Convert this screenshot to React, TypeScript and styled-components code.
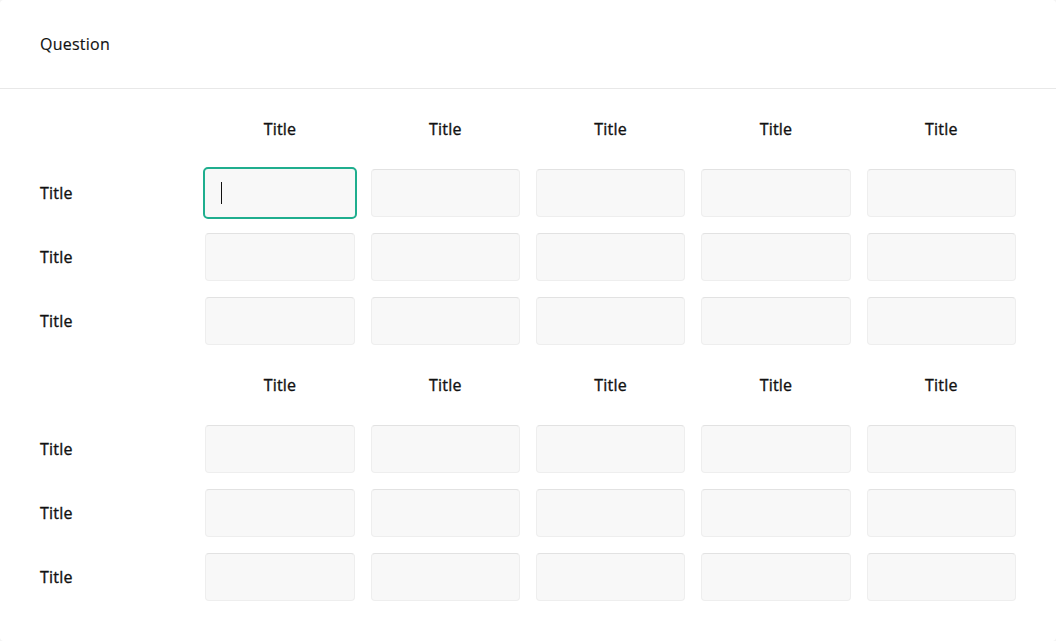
import React from "react";
import styled, { createGlobalStyle } from "styled-components";

const Global = createGlobalStyle`
  html, body { margin: 0; padding: 0; background: #f4f4f4; }
  body { font-family: "Open Sans", "Noto Sans", sans-serif; color: #1e1e1e; }
  * { box-sizing: border-box; }
`;

const Card = styled.div`
  width: 1056px;
  height: 641px;
  background: #fff;
  border-radius: 4px;
  overflow: hidden;
  display: flex;
  flex-direction: column;
`;

const Header = styled.div`
  height: 89px;
  padding: 0 40px;
  display: flex;
  align-items: center;
  border-bottom: 1px solid #e8e8e8;
  font-size: 16px;
  font-weight: 400;
  color: #111;
  letter-spacing: 0.25px;
  -webkit-text-stroke: 0.15px #111;
`;

const Grid = styled.div`
  padding: 16px 40px 40px;
  display: grid;
  grid-template-columns: repeat(6, 1fr);
  grid-auto-rows: 48px;
  gap: 16px;
`;

const ColHead = styled.div`
  display: flex;
  align-items: center;
  justify-content: center;
  font-size: 16px;
  color: #111;
  letter-spacing: 0.2px;
  -webkit-text-stroke: 0.35px #111;
`;

const RowLabel = styled.div`
  display: flex;
  align-items: center;
  font-size: 16px;
  color: #111;
  letter-spacing: 0.2px;
  -webkit-text-stroke: 0.35px #111;
`;

const Cell = styled.div<{ $focused?: boolean }>`
  position: relative;
  background: #f8f8f8;
  border-radius: 4px;
  border: 1px solid #eeeeee;
  border-top-color: #e2e2e2;
  ${(p) =>
    p.$focused
      ? `
    border: 2px solid #1fae8e;
    margin: -2px;
    border-radius: 5px;
  `
      : ""}
`;

const Caret = styled.span`
  position: absolute;
  left: 16px;
  top: 13px;
  width: 1px;
  height: 22px;
  background: #111;
`;

const cols = ["Title", "Title", "Title", "Title", "Title"];
const rows = ["Title", "Title", "Title"];

function Section({ focusFirst }: { focusFirst?: boolean }) {
  return (
    <>
      <div />
      {cols.map((c, i) => (
        <ColHead key={"h" + i}>{c}</ColHead>
      ))}
      {rows.map((r, ri) => (
        <React.Fragment key={"r" + ri}>
          <RowLabel>{r}</RowLabel>
          {cols.map((_, ci) => {
            const f = focusFirst && ri === 0 && ci === 0;
            return <Cell key={ci} $focused={f}>{f && <Caret />}</Cell>;
          })}
        </React.Fragment>
      ))}
    </>
  );
}

export default function App() {
  return (
    <>
      <Global />
      <Card>
        <Header>Question</Header>
        <Grid>
          <Section focusFirst />
          <Section />
        </Grid>
      </Card>
    </>
  );
}
